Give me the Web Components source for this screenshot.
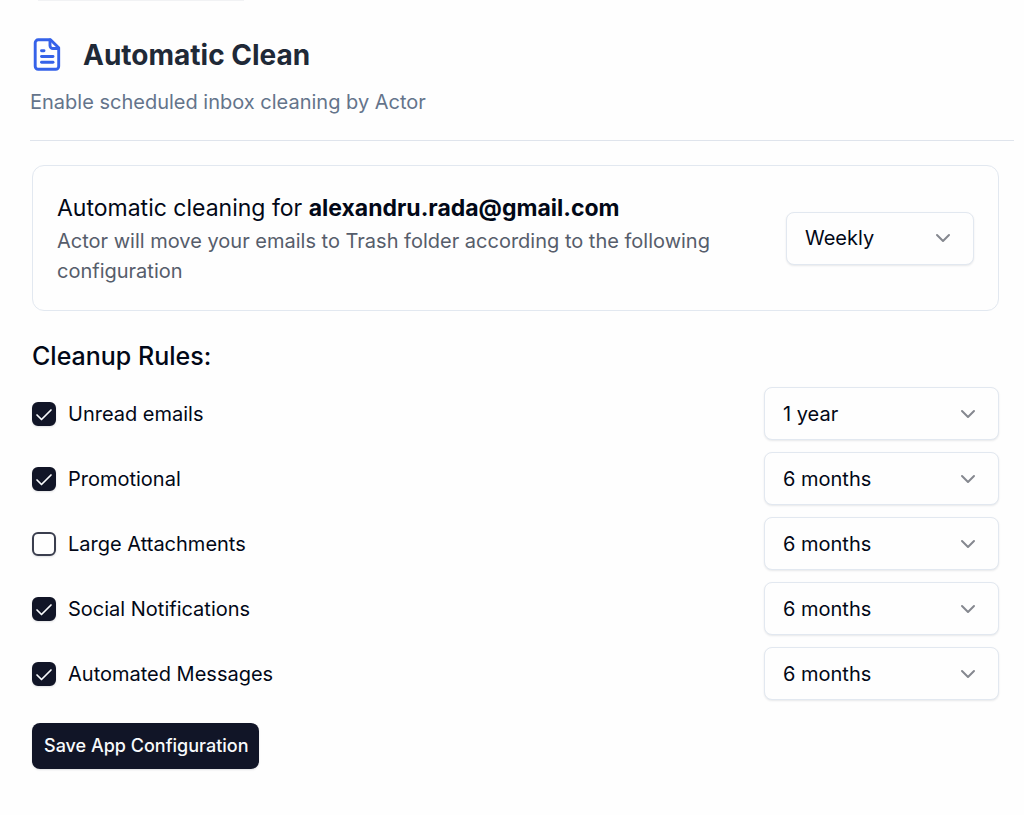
<!DOCTYPE html>
<html lang="en">
<head>
<meta charset="utf-8">
<meta name="viewport" content="width=device-width, initial-scale=1">
<title>Automatic Clean</title>
<style>
  :root {
    --ink: #020817;
    --navy: #111527;
    --line: #e2e8f0;
    --surface: #fefefe;
  }
  body {
    margin: 0;
    background: var(--surface);
    color: var(--ink);
    font: 400 20px/30px Inter, "Liberation Sans", sans-serif;
  }
</style>
</head>
<body>
<clean-page>
  <page-header slot="header">
    <span slot="title">Automatic Clean</span>
    <span slot="subtitle">Enable scheduled inbox cleaning by Actor</span>
  </page-header>
  <schedule-card>
    <span slot="title">Automatic cleaning for <strong>alexandru.rada@gmail.com</strong></span>
    <span slot="description">Actor will move your emails to Trash folder according to the following configuration</span>
    <select-field slot="control" label="Cleaning frequency" options="Daily|Weekly|Monthly" value="Weekly"></select-field>
  </schedule-card>
  <rule-list heading="Cleanup Rules:">
    <rule-row label="Unread emails" value="1 year" checked></rule-row>
    <rule-row label="Promotional" value="6 months" checked></rule-row>
    <rule-row label="Large Attachments" value="6 months"></rule-row>
    <rule-row label="Social Notifications" value="6 months" checked></rule-row>
    <rule-row label="Automated Messages" value="6 months" checked></rule-row>
  </rule-list>
  <save-button>Save App Configuration</save-button>
</clean-page>

<script>
  const define = (name, render) => customElements.define(name, class extends HTMLElement {
    connectedCallback() {
      if (this.shadowRoot) return;
      this.attachShadow({ mode: "open" }).innerHTML = render(this);
    }
  });

  define("clean-page", () => `
    <style>
      :host { display: block; }
      .edge { height: 1px; width: 206px; margin-left: 38px; background: #f1f2f4; }
      header { padding: 0 10px 0 30px; }
      main { display: flex; flex-direction: column; align-items: stretch; padding: 24px 25px 40px 32px; }
    </style>
    <div class="edge"></div>
    <header><slot name="header"></slot></header>
    <main><slot></slot></main>`);

  define("page-header", () => `
    <style>
      :host { display: block; padding: 34px 0 23px; border-bottom: 1px solid #dfe4ec; }
      .top { display: flex; align-items: center; gap: 18px; }
      svg { width: 35px; height: 35px; display: block; }
      h1 { margin: 0; font-size: 28px; line-height: 40px; font-weight: 700; color: #1f2937; }
      p { margin: 12px 0 0; color: #64748b; }
    </style>
    <div class="top">
      <svg viewBox="0 0 35 35" fill="none" stroke="#3562e9" stroke-width="2.9" stroke-linecap="round" stroke-linejoin="round" aria-hidden="true">
        <path d="M20.500 1.800H8.200a3 3 0 0 0-3 3V28.300a3 3 0 0 0 3 3H25.700a3 3 0 0 0 3-3V9.800Z"/>
        <path d="M20 2V7.500a3 3 0 0 0 3 3H28.500"/><path d="M11.500 12.800H14"/><path d="M11.500 18.500H23"/><path d="M11.500 24.300H23"/>
      </svg>
      <h1><slot name="title"></slot></h1>
    </div>
    <p><slot name="subtitle"></slot></p>`);

  define("schedule-card", () => `
    <style>
      :host { display: flex; align-items: center; gap: 24px; padding: 24px; border: 1px solid var(--line); border-radius: 12px; }
      .text { flex: 1; min-width: 0; }
      h2 { margin: 0; font-size: 23px; line-height: 36px; font-weight: 400; }
      p { margin: 0; color: #565d6b; }
      slot[name=control] { display: block; width: 188px; }
    </style>
    <div class="text">
      <h2><slot name="title"></slot></h2>
      <p><slot name="description"></slot></p>
    </div>
    <slot name="control"></slot>`);

  define("select-field", (el) => `
    <style>
      :host { display: grid; align-items: center; }
      select, svg { grid-area: 1 / 1; }
      select {
        appearance: none; box-sizing: border-box; width: 100%; height: 53px; margin: 0; padding: 0 48px 0 18px;
        border: 1px solid var(--line); border-radius: 8px; background: var(--surface);
        box-shadow: 0 1px 2px #0f172a18; font: inherit; color: inherit;
      }
      svg { justify-self: end; width: 22px; height: 22px; margin-right: 20px; pointer-events: none; }
    </style>
    <select aria-label="${el.getAttribute("label")}">
      ${el.getAttribute("options").split("|").map((o) => `<option${o === el.getAttribute("value") ? " selected" : ""}>${o}</option>`).join("")}
    </select>
    <svg viewBox="0 0 22 22" fill="none" stroke="#85888f" stroke-width="2" stroke-linecap="round" stroke-linejoin="round" aria-hidden="true"><path d="M5 8l6 6 6-6"/></svg>`);

  define("rule-list", (el) => `
    <style>
      :host { display: block; margin-top: 28px; }
      h2 { margin: 0 0 14px; font-size: 25px; line-height: 34px; font-weight: 500; }
      .rows { display: grid; gap: 12px; }
    </style>
    <h2>${el.getAttribute("heading")}</h2>
    <div class="rows"><slot></slot></div>`);

  define("rule-row", (el) => `
    <style>
      :host { display: flex; align-items: center; justify-content: space-between; gap: 24px; }
      label { display: flex; align-items: center; gap: 12px; }
      .box { display: grid; }
      input, svg { grid-area: 1 / 1; }
      input {
        appearance: none; box-sizing: border-box; width: 24px; height: 24px; margin: 0;
        border: 2px solid #3a3e4e; border-radius: 6px; background: var(--surface); box-shadow: 0 1px 2px #0f172a20;
      }
      input:checked { background: var(--navy); border-color: var(--navy); }
      svg { width: 24px; height: 24px; visibility: hidden; pointer-events: none; }
      input:checked + svg { visibility: visible; }
      select-field { width: 235px; }
    </style>
    <label>
      <span class="box">
        <input type="checkbox"${el.hasAttribute("checked") ? " checked" : ""}>
        <svg viewBox="0 0 24 24" fill="none" stroke="#f8fafc" stroke-width="1.7" stroke-linecap="round" stroke-linejoin="round" aria-hidden="true"><path d="M5 13l4.500 4.500 9.500-9.500"/></svg>
      </span>
      <span>${el.getAttribute("label")}</span>
    </label>
    <select-field label="${el.getAttribute("label")} age" options="1 month|3 months|6 months|1 year" value="${el.getAttribute("value")}"></select-field>`);

  define("save-button", () => `
    <style>
      :host { display: block; margin-top: 23px; }
      button {
        height: 46px; padding: 0 10px 0 12px; border: 0; border-radius: 8px; background: var(--navy); color: #f8fafc;
        font: inherit; font-size: 18px; font-weight: 500; box-shadow: 0 1px 2px #0f172a20;
      }
    </style>
    <button type="button"><slot></slot></button>`);
</script>
</body>
</html>
